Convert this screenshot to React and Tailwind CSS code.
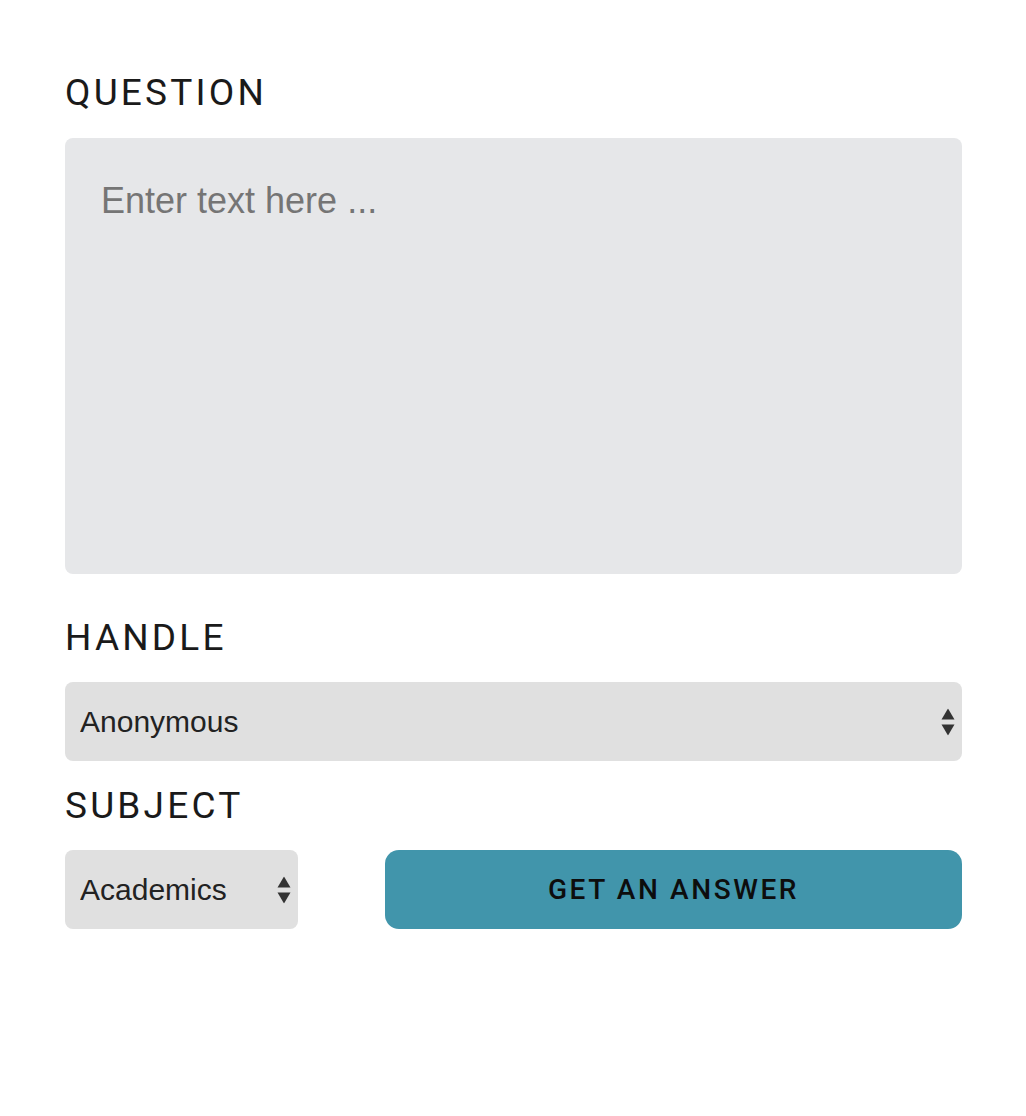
import React, { useState } from 'react';

function Arrows() {
  return (
    <svg
      className="pointer-events-none absolute right-[7px] top-1/2 -translate-y-1/2"
      width="14"
      height="27"
      viewBox="0 0 14 27"
    >
      <path d="M7 0 L13.5 11 L0.5 11 Z" fill="#333" />
      <path d="M0.5 16 L13.5 16 L7 27 Z" fill="#333" />
    </svg>
  );
}

function Select({ value, onChange, options, className }) {
  return (
    <div className={`relative h-[79px] rounded-[8px] bg-[#e0e0e0] ${className}`}>
      <select
        value={value}
        onChange={e => onChange(e.target.value)}
        className="h-full w-full appearance-none bg-transparent pl-[15px] pr-8 text-[30px] text-[#222] outline-none"
        style={{ fontFamily: '"Liberation Sans", Arial, sans-serif' }}
      >
        {options.map(o => (
          <option key={o}>{o}</option>
        ))}
      </select>
      <Arrows />
    </div>
  );
}

const labelClass = "text-[37px] leading-none tracking-[3.2px] text-[#1a1a1a] font-[Roboto,sans-serif]";

export default function App() {
  const [question, setQuestion] = useState('');
  const [handle, setHandle] = useState('Anonymous');
  const [subject, setSubject] = useState('Academics');

  return (
    <div className="min-h-[1116px] bg-white px-[65px] pt-[74px]" style={{ width: 1026 }}>
      <div className="flex w-[897px] flex-col">
        <label className={labelClass}>QUESTION</label>
        <textarea
          value={question}
          onChange={e => setQuestion(e.target.value)}
          placeholder="Enter text here ..."
          className="mt-[27px] h-[436px] w-full resize-none rounded-[8px] bg-[#e6e7e9] pl-[36px] pr-6 pt-[42px] text-[36px] leading-[1.15] text-[#222] outline-none placeholder:text-[#757575]"
          style={{ fontFamily: '"Liberation Sans", Arial, sans-serif' }}
        />

        <label className={`${labelClass} mt-[45px]`}>HANDLE</label>
        <Select
          value={handle}
          onChange={setHandle}
          options={['Anonymous', 'My Handle']}
          className="mt-[26px] w-full"
        />

        <label className={`${labelClass} mt-[26px]`}>SUBJECT</label>
        <div className="mt-[26px] flex items-center gap-[87px]">
          <Select
            value={subject}
            onChange={setSubject}
            options={['Academics', 'Career', 'Life']}
            className="w-[233px] shrink-0"
          />
          <button className="h-[79px] flex-1 rounded-[14px] bg-[#4195ab] text-[28px] font-medium tracking-[2.6px] text-[#0d0d0d] font-[Roboto,sans-serif]">
            GET AN ANSWER
          </button>
        </div>
      </div>
    </div>
  );
}
